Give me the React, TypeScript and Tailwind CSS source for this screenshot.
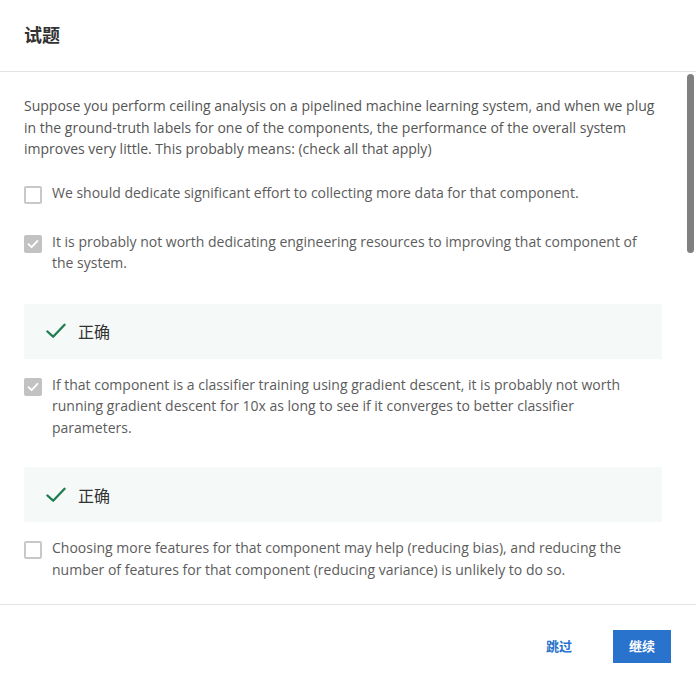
import React from "react";

function Box({ checked }: { checked: boolean }) {
  if (checked) {
    return (
      <div className="mt-[4px] flex h-[18px] w-[18px] shrink-0 items-center justify-center rounded-[2px] bg-[#c2c2c2]">
        <svg width="12" height="10" viewBox="0 0 12 10" fill="none">
          <path d="M1.5 5.2L4.6 8.2L10.5 1.8" stroke="#fff" strokeWidth="1.8" strokeLinecap="round" strokeLinejoin="round" />
        </svg>
      </div>
    );
  }
  return <div className="mt-[4px] h-[18px] w-[18px] shrink-0 rounded-[2px] border-2 border-[#c8c8c8] bg-white" />;
}

function Option({ checked, text, className }: { checked: boolean; text: string; className: string }) {
  return (
    <div className={"flex gap-[10px] pr-[16px] " + className}>
      <Box checked={checked} />
      <div className="text-[14px] leading-[21.5px] text-[#5c5c5c]">{text}</div>
    </div>
  );
}

function Feedback({ className }: { className: string }) {
  return (
    <div className={"flex h-[55px] items-center bg-[#f5f9f8] pl-[22px] " + className}>
      <svg width="20" height="16" viewBox="0 0 21 16" fill="none">
        <path d="M1.5 8.5L7.5 14L19.5 1.5" stroke="#1e7c50" strokeWidth="2.4" strokeLinecap="round" strokeLinejoin="round" />
      </svg>
      <span className="ml-[12px] text-[16px] font-normal text-[#333]" style={{ fontFamily: '"Noto Sans CJK SC", sans-serif' }}>正确</span>
    </div>
  );
}

export default function App() {
  return (
    <div className="flex h-[688px] w-[696px] flex-col bg-white" style={{ fontFamily: '"Open Sans", "Noto Sans CJK SC", sans-serif' }}>
      <div className="flex h-[72px] shrink-0 items-center border-b border-[#e2e2e2] px-6 pb-[2px]">
        <h1 className="text-[18px] font-bold text-[#333]" style={{ fontFamily: '"Noto Sans CJK SC", sans-serif' }}>试题</h1>
      </div>
      <div className="relative h-[532px] shrink-0 overflow-hidden pl-6 pr-[34px] pt-[23px]">
        <p className="text-[14px] leading-[21.5px] text-[#555]">
          Suppose you perform ceiling analysis on a pipelined machine learning system, and when we plug in the ground-truth labels for one of the components, the performance of the overall system improves very little. This probably means: (check all that apply)
        </p>
        <Option className="mt-[22px]" checked={false} text="We should dedicate significant effort to collecting more data for that component." />
        <Option className="mt-[27px]" checked={true} text="It is probably not worth dedicating engineering resources to improving that component of the system." />
        <Feedback className="mt-[30px]" />
        <Option className="mt-[15px]" checked={true} text="If that component is a classifier training using gradient descent, it is probably not worth running gradient descent for 10x as long to see if it converges to better classifier parameters." />
        <Feedback className="mt-[29px]" />
        <Option className="mt-[15px]" checked={false} text="Choosing more features for that component may help (reducing bias), and reducing the number of features for that component (reducing variance) is unlikely to do so." />
        <div className="absolute right-[2px] top-[2px] h-[179px] w-[7px] rounded-full bg-[#808080]" />
      </div>
      <div className="flex h-[84px] shrink-0 items-center justify-end border-t border-[#e2e2e2] pb-[1px] pr-[25px]" style={{ fontFamily: '"Noto Sans CJK SC", sans-serif' }}>
        <button className="mr-[41px] text-[13px] font-bold text-[#2a73cc]">跳过</button>
        <button className="flex h-[33px] w-[58px] items-center justify-center bg-[#2a73cc] text-[13px] font-bold text-white">继续</button>
      </div>
    </div>
  );
}
